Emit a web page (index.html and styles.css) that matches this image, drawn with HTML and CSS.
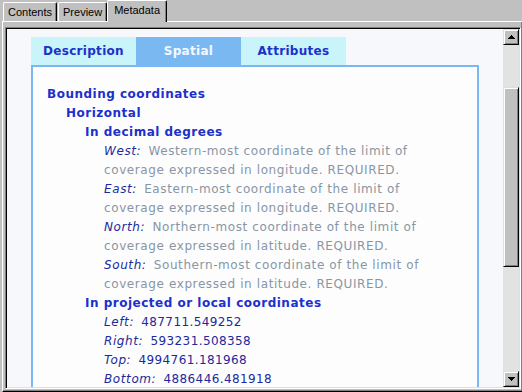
FILE: index.html
```html
<!DOCTYPE html>
<html lang="en">
<head>
  <meta charset="UTF-8" />
  <title>Metadata - Spatial</title>
  <link rel="stylesheet" href="styles.css">
</head>
<body>
  <div class="window">
    <div class="tabstrip">
      <div class="wtab">Contents</div>
      <div class="wtab">Preview</div>
      <div class="wtab active">Metadata</div>
    </div>

    <div class="page">
      <div class="viewer">
        <div class="doc">
          <div class="doc-tabs">
            <div class="doc-tab">Description</div>
            <div class="doc-tab current">Spatial</div>
            <div class="doc-tab">Attributes</div>
          </div>

          <div class="doc-box">
            <div class="heading">Bounding coordinates</div>
            <div class="level">
              <div class="heading">Horizontal</div>
              <div class="level">
                <div class="heading">In decimal degrees</div>
                <div class="level">
                  <div class="item"><i>West:</i> <span class="desc">Western-most coordinate of the limit of coverage expressed in longitude. REQUIRED.</span></div>
                  <div class="item"><i>East:</i> <span class="desc">Eastern-most coordinate of the limit of coverage expressed in longitude. REQUIRED.</span></div>
                  <div class="item"><i>North:</i> <span class="desc">Northern-most coordinate of the limit of coverage expressed in latitude. REQUIRED.</span></div>
                  <div class="item"><i>South:</i> <span class="desc">Southern-most coordinate of the limit of coverage expressed in latitude. REQUIRED.</span></div>
                </div>
                <div class="heading">In projected or local coordinates</div>
                <div class="level">
                  <div class="item"><i>Left:</i> 487711.549252</div>
                  <div class="item"><i>Right:</i> 593231.508358</div>
                  <div class="item"><i>Top:</i> 4994761.181968</div>
                  <div class="item"><i>Bottom:</i> 4886446.481918</div>
                </div>
              </div>
            </div>
          </div>
        </div>

        <!-- fake classic scrollbar -->
        <div class="scrollbar">
          <div class="sb-btn">
            <svg width="7" height="4" viewBox="0 0 7 4"><path d="M3 0h1v1h1v1h1v1h1v1H0V3h1V2h1V1h1z" fill="#000"/></svg>
          </div>
          <div class="sb-track">
            <div class="sb-thumb"></div>
          </div>
          <div class="sb-btn">
            <svg width="7" height="4" viewBox="0 0 7 4"><path d="M0 0h7v1H6v1H5v1H4v1H3V3H2V2H1V1H0z" fill="#000"/></svg>
          </div>
        </div>
      </div>
    </div>
  </div>
</body>
</html>
```

FILE: styles.css
```css
body {
  margin: 0;
  background: #c0c0c0;
  font-family: "DejaVu Sans", Verdana, sans-serif;
}

.window {
  width: 522px;
  height: 392px;
  overflow: hidden;
  background: #c0c0c0;
}

/* Windows style tab strip */
.tabstrip {
  display: flex;
  align-items: flex-end;
  height: 21px;
  padding-left: 3px;
}

.wtab {
  height: 18px;
  padding: 0 4px;
  margin-right: 1px;
  border-top: 1px solid #fff;
  border-left: 1px solid #fff;
  border-right: 1px solid #000;
  box-shadow: inset -1px 0 #808080;
  border-radius: 2px 2px 0 0;
  font-family: "Liberation Sans", Arial, sans-serif;
  font-size: 11px;
  line-height: 19px;
  color: #000;
}

.wtab.active {
  position: relative;
  z-index: 1;
  height: 21px;
  margin-left: -1px;
  margin-bottom: -1px;
  padding: 0 6px;
  line-height: 19px;
  background: #c0c0c0;
}

.page {
  display: flex;
  flex-direction: column;
  width: 516px;
  height: 362px;
  margin-left: 2px;
  padding: 5px 1px 2px 2px;
  border-top: 1px solid #fff;
  border-left: 1px solid #fff;
  border-right: 1px solid #000;
  border-bottom: 1px solid #000;
  box-shadow: inset -1px -1px #808080;
}

/* sunken viewer area */
.viewer {
  flex: 1;
  display: flex;
  min-height: 0;
  padding: 1px;
  border: 1px solid;
  border-color: #808080 #fff #fff #808080;
  box-shadow: inset 1px 1px #000, inset -1px -1px #dfdfdf;
}

.doc {
  flex: 1;
  overflow: hidden;
  padding: 8px 24px 0 24px;
  background: #f6f8fc;
}

.doc-tabs {
  display: flex;
}

.doc-tab {
  width: 105px;
  height: 28px;
  line-height: 28px;
  text-align: center;
  background: #c8f4fa;
  color: #1c30cc;
  font-size: 12px;
  font-weight: bold;
  letter-spacing: 0.3px;
}

.doc-tab.current {
  background: #7ab8f2;
  color: #f4f8ff;
}

.doc-box {
  border: 2px solid #7ab8f2;
  border-bottom: none;
  background: #fdfdfe;
  padding: 18px 32px 20px 14px;
  font-size: 12px;
  line-height: 19px;
  letter-spacing: 0.6px;
}

.heading {
  font-weight: bold;
  color: #1c30cc;
  letter-spacing: 0.5px;
}

.level {
  padding-left: 19px;
}

.item {
  color: #1c2a9c;
  letter-spacing: 0.4px;
}

.item i {
  margin-right: 3px;
  color: #1c2a9c;
  letter-spacing: 0.6px;
}

.desc {
  color: #8896a4;
  letter-spacing: 0.6px;
}

/* scrollbar */
.scrollbar {
  display: flex;
  flex-direction: column;
  width: 16px;
  background: #e2e2e2;
}

.sb-btn {
  display: flex;
  align-items: center;
  justify-content: center;
  height: 14px;
  background: #c0c0c0;
  border: 1px solid;
  border-color: #dfdfdf #000 #000 #dfdfdf;
  box-shadow: inset 1px 1px #fff, inset -1px -1px #808080;
}

.sb-track {
  flex: 1;
}

.sb-thumb {
  height: 178px;
  margin-top: 42px;
  background: #c0c0c0;
  border: 1px solid;
  border-color: #dfdfdf #000 #000 #dfdfdf;
  box-shadow: inset 1px 1px #fff, inset -1px -1px #808080;
}
```
